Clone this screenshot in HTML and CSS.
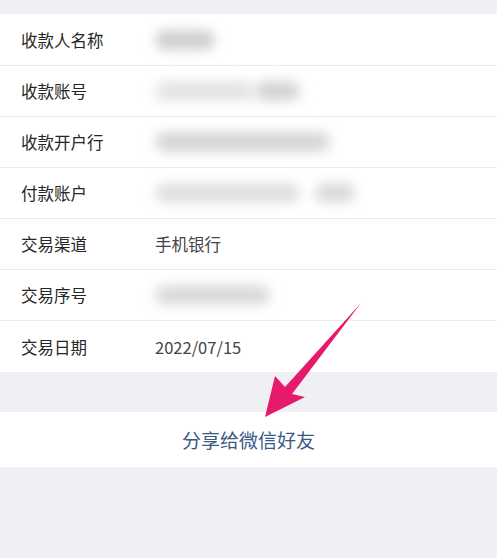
FILE: index.html
```html
<!DOCTYPE html>
<html lang="zh-CN">
<head>
    <meta charset="UTF-8">
    <meta name="viewport" content="width=device-width, initial-scale=1.0">
    <title>交易详情</title>
    <link rel="stylesheet" href="styles.css">
</head>
<body>
    <div class="page">
        <div class="top-gap"></div>

        <div class="list">
            <div class="row">
                <span class="label">收款人名称</span>
                <span class="value"><i class="blur b-name"></i></span>
            </div>
            <div class="row">
                <span class="label">收款账号</span>
                <span class="value"><i class="blur b-acct"></i><i class="blur b-acct-end"></i></span>
            </div>
            <div class="row">
                <span class="label">收款开户行</span>
                <span class="value"><i class="blur b-bank"></i></span>
            </div>
            <div class="row">
                <span class="label">付款账户</span>
                <span class="value"><i class="blur b-pay"></i><i class="blur b-pay-end"></i></span>
            </div>
            <div class="row">
                <span class="label">交易渠道</span>
                <span class="value">手机银行</span>
            </div>
            <div class="row">
                <span class="label">交易序号</span>
                <span class="value"><i class="blur b-serial"></i></span>
            </div>
            <div class="row">
                <span class="label">交易日期</span>
                <span class="value">2022/07/15</span>
            </div>
        </div>

        <div class="gap"></div>

        <div class="share">分享给微信好友</div>

        <div class="bottom"></div>

        <svg class="arrow" width="497" height="558" viewBox="0 0 497 558">
            <polygon points="265,417 275,376 285,387 361,303 292,394 305,397" fill="#e6196a"/>
        </svg>
    </div>
</body>
</html>
```

FILE: styles.css
```css
body {
    margin: 0;
    background-color: #efeff4;
    font-family: "Noto Sans CJK SC", "Noto Sans", sans-serif;
}
.page {
    position: relative;
    width: 497px;
    height: 558px;
    overflow: hidden;
    background-color: #efeff4;
}
.top-gap {
    height: 14px;
}
.list {
    background: #fff;
}
.row {
    display: flex;
    align-items: center;
    height: 51px;
    border-bottom: 1px solid #ececec;
    box-sizing: border-box;
}
.row:first-child {
    height: 52px;
}
.row:last-child {
    border-bottom: none;
}
.label {
    width: 134px;
    padding-left: 21px;
    font-size: 16.5px;
    color: #262626;
}
.value {
    display: flex;
    align-items: center;
    font-size: 16.5px;
    color: #444;
}
.blur {
    display: block;
    height: 20px;
    background: #d4d4d4;
    border-radius: 10px;
    filter: blur(6px);
}
.b-name {
    width: 60px;
    background: #cfcfcf;
}
.b-acct {
    width: 100px;
    background: #e4e4e4;
}
.b-acct-end {
    width: 45px;
    background: #d4d4d4;
}
.b-bank {
    width: 175px;
    background: #d6d6d6;
}
.b-pay {
    width: 145px;
    background: #e0e0e0;
}
.b-pay-end {
    width: 40px;
    margin-left: 15px;
    background: #dadada;
}
.b-serial {
    width: 115px;
    background: #dadada;
}
.gap {
    height: 40px;
}
.share {
    height: 55px;
    line-height: 55px;
    background: #fff;
    text-align: center;
    font-size: 19px;
    color: #3a5a86;
}
.arrow {
    position: absolute;
    left: 0;
    top: 0;
}
```
